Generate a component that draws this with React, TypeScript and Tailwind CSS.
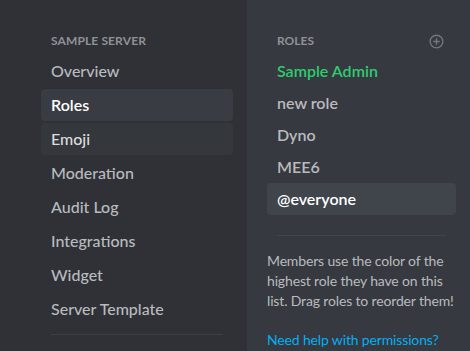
import type { FC } from 'react';

const menu = ['Overview', 'Roles', 'Emoji', 'Moderation', 'Audit Log', 'Integrations', 'Widget', 'Server Template'];

const roles = [
  { name: 'Sample Admin', color: 'text-[#2ecc71]' },
  { name: 'new role', color: 'text-[#b9bbbe]' },
  { name: 'Dyno', color: 'text-[#b9bbbe]' },
  { name: 'MEE6', color: 'text-[#b9bbbe]' },
];

const font = { fontFamily: 'Lato, "Open Sans", sans-serif' };

export const Sidebar: FC = () => (
  <aside className="flex w-[247px] shrink-0 flex-col bg-[#2f3136] pl-[41px] pr-[14px] pt-[33px]">
    <div className="h-4 px-[10px] text-[12px] font-bold uppercase leading-4 tracking-[0.01em] text-[#8e9297]">
      Sample Server
    </div>
    <nav className="mt-[6px] flex flex-col gap-[2px]">
      {menu.map((item) => (
        <div
          key={item}
          className={
            'flex h-8 items-center rounded-[4px] px-[10px] text-[16px] font-medium ' +
            (item === 'Roles'
              ? 'bg-[#393c43] font-semibold text-white'
              : item === 'Emoji'
                ? 'bg-[#34373c] text-[#dcddde]'
                : 'text-[#b9bbbe]')
          }
        >
          {item}
        </div>
      ))}
    </nav>
    <div className="mx-[10px] mt-[9px] h-px bg-[#3b3e44]" />
  </aside>
);

export const RoleList: FC = () => (
  <section className="flex flex-1 flex-col bg-[#36393f] pl-5 pr-[14px] pt-[33px]">
    <div className="flex h-4 items-center justify-between pl-[10px] pr-[12px]">
      <span className="text-[12px] font-bold uppercase leading-4 text-[#8e9297]">Roles</span>
      <svg width="15" height="15" viewBox="0 0 16 16" className="text-[#72767d]">
        <circle cx="8" cy="8" r="6.75" fill="none" stroke="currentColor" strokeWidth="1.5" />
        <path d="M8 4.5v7M4.5 8h7" stroke="currentColor" strokeWidth="1.6" />
      </svg>
    </div>
    <div className="mt-[6px] flex flex-col">
      {roles.map((r) => (
        <div key={r.name} className={`flex h-8 items-center px-[10px] text-[16px] font-semibold ${r.color}`}>
          {r.name}
        </div>
      ))}
      <div className="flex h-8 items-center rounded-[4px] bg-[#40444b] px-[10px] text-[16px] font-semibold text-white">
        @everyone
      </div>
    </div>
    <div className="mx-[10px] mt-5 h-px bg-[#42454c]" />
    <p className="mr-[-8px] mt-[15px] text-[14px] leading-5 tracking-[-0.15px] text-[#b9bbbe]">
      Members use the color of the highest role they have on this list. Drag roles to reorder them!
    </p>
    <a className="mt-[19px] text-[14px] leading-5 tracking-[-0.15px] text-[#00b0f4]">Need help with permissions?</a>
  </section>
);

export default function App() {
  return (
    <div className="flex h-[351px] w-[470px] overflow-hidden" style={font}>
      <Sidebar />
      <RoleList />
    </div>
  );
}
